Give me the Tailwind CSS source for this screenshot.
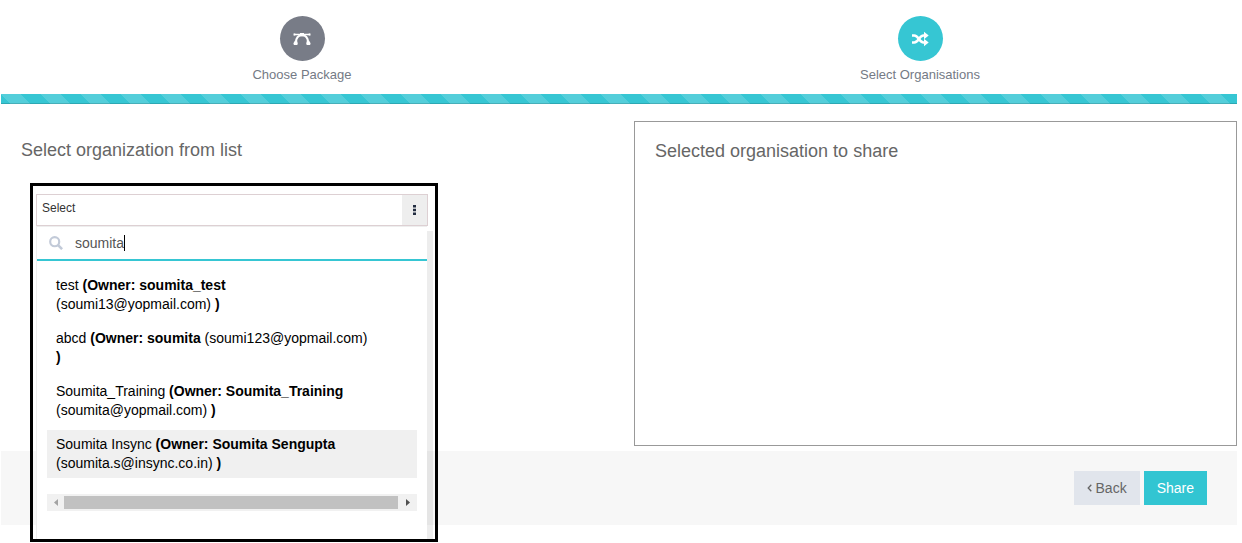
<!DOCTYPE html>
<html lang="en">
<head>
<meta charset="utf-8">
<meta name="viewport" content="width=device-width, initial-scale=1">
<title>Share package</title>
<script src="https://cdn.jsdelivr.net/npm/@tailwindcss/browser@4"></script>
</head>
<body class="min-h-screen bg-white pl-px pr-[5px] font-['Liberation_Sans',Arial,sans-serif] text-sm text-[#666666]">
<header>
  <ol class="grid grid-cols-2 pt-4 text-[13px] leading-5 text-[#747a85]">
    <li class="flex flex-col items-center gap-1 pr-4">
      <span class="flex size-[45px] items-center justify-center rounded-full bg-[#787c87]">
        <svg class="h-[14px] w-[18px]" viewBox="0 0 18 14" fill="none" stroke="#fff" aria-hidden="true">
          <path d="M1 2.500h16" stroke-width="1.500"/>
          <path d="M3 10C3.200 6 5 3.400 9 3 13 3.400 14.800 6 15 10" stroke-width="2"/>
          <path d="M7 1h4v3.200H7zM.5 1.600h1.800v1.900H.5zM15.700 1.600h1.800v1.900h-1.800zM2 8.400h1.900l.9 2.800-.5 1.900H.9l-.5-1.900zM14.100 8.400H16l1.600 2.800-.5 1.900h-3.400l-.5-1.900z" fill="#fff" stroke="none"/>
        </svg>
      </span>
      <span>Choose Package</span>
    </li>
    <li class="flex flex-col items-center gap-1 pr-4">
      <span class="flex size-[45px] items-center justify-center rounded-full bg-[#36c6d3]">
        <svg class="h-4 w-[18px]" viewBox="0 0 18 16" fill="none" stroke="#fff" stroke-width="2.500" aria-hidden="true">
          <path d="M1 4.500h2.200C7.800 4.500 8 11.500 12.500 11.500H14M1 11.500h2.200C7.800 11.500 8 4.500 12.500 4.500H14"/>
          <path d="M13 .8l4.700 3.700L13 8.200zM13 7.800l4.700 3.700-4.700 3.700z" fill="#fff" stroke="none"/>
        </svg>
      </span>
      <span>Select Organisations</span>
    </li>
  </ol>
  <div role="progressbar" aria-label="Step 2 of 2" class="mt-[9px] h-[10px] bg-[#36c6d3] bg-[linear-gradient(45deg,rgba(255,255,255,.15)_25%,transparent_25%,transparent_50%,rgba(255,255,255,.15)_50%,rgba(255,255,255,.15)_75%,transparent_75%,transparent)] bg-[length:40px_40px] shadow-[inset_0_-1px_0_rgba(0,0,0,0.15)]"></div>
</header>

<main class="grid grid-cols-2 pt-[17px]">
  <section class="relative pl-5 pt-[18px]">
    <h2 class="text-lg leading-[22px]">Select organization from list</h2>

    <div class="absolute left-[29px] top-[62px] w-[408px] border-[3px] border-black pl-[3px] pt-2">
      <button type="button" aria-expanded="true" class="flex h-8 w-[392px] justify-between border border-[#ddd0d3] bg-white text-left text-xs text-[#333]">
        <span class="pl-[5px] pt-[5px]">Select</span>
        <span class="flex w-[25px] items-center justify-center self-stretch bg-[#eeeeee]">
          <svg class="h-[10px] w-[3px]" viewBox="0 0 3 10" fill="#222c40" aria-hidden="true"><path d="M0 0h3v2.500H0zM0 3.700h3v2.500H0zM0 7.500h3V10H0z"/></svg>
        </span>
      </button>
      <div class="flex">
        <div class="w-[391px] shrink-0 border-l border-[#eeeeee] bg-white">
          <label class="flex h-[35px] items-center gap-3 border-b-2 border-t border-b-[#36c6d3] border-t-[#eeeeee] pl-3">
            <svg class="size-[14px] shrink-0" viewBox="0 0 13 13" fill="none" stroke="#c2cad8" stroke-width="2" aria-hidden="true"><circle cx="5.300" cy="5.300" r="4.200"/><path d="M8.400 8.400l3.800 3.800" stroke-width="2.400"/></svg>
            <span class="relative flex w-full items-center">
              <input type="text" aria-label="Search organization" value="soumita" class="w-full bg-transparent text-sm text-[#555] outline-none">
              <span class="absolute left-[49px] h-4 w-px bg-black"></span>
            </span>
          </label>
          <ul role="listbox" class="flex flex-col gap-[5px] px-[10px] pt-[10px] leading-[19px] text-black">
            <li role="option" class="px-[9px] py-[5px]">test <b>(Owner: soumita_test</b><br>(soumi13@yopmail.com) <b>)</b></li>
            <li role="option" class="px-[9px] py-[5px]">abcd <b>(Owner: soumita</b> (soumi123@yopmail.com)<br><b>)</b></li>
            <li role="option" class="px-[9px] py-[5px]">Soumita_Training <b>(Owner: Soumita_Training</b><br>(soumita@yopmail.com) <b>)</b></li>
            <li role="option" aria-selected="true" class="bg-[#f0f0f0] px-[9px] py-[5px]">Soumita Insync <b>(Owner: Soumita Sengupta</b><br>(soumita.s@insync.co.in) <b>)</b></li>
          </ul>
          <div class="px-[10px] pb-7 pt-4">
            <div class="flex h-[17px] items-center bg-[#f1f1f1]">
              <span class="flex w-[17px] justify-center"><svg class="h-[7px] w-1" viewBox="0 0 4 7" fill="#a3a3a3" aria-hidden="true"><path d="M4 0v7L0 3.500z"/></svg></span>
              <span class="h-[13px] flex-1 bg-[#c1c1c1]"></span>
              <span class="flex w-[19px] justify-center"><svg class="h-[7px] w-1" viewBox="0 0 4 7" fill="#505050" aria-hidden="true"><path d="M0 0v7l4-3.500z"/></svg></span>
            </div>
          </div>
        </div>
        <span class="mt-[5px] w-[6px] bg-black/7"></span>
      </div>
    </div>
  </section>

  <section class="ml-[15px] min-h-[325px] border border-[#999999] px-5 pt-[18px]">
    <h2 class="text-lg leading-[22px]">Selected organisation to share</h2>
  </section>
</main>

<footer class="mt-[5px] flex justify-end gap-1 bg-[#f7f7f7] py-5 pr-[30px]">
  <button type="button" class="flex h-[34px] items-center gap-1 bg-[#e1e5ec] px-[13px] text-sm text-[#666]">
    <svg class="h-2 w-[5px]" viewBox="0 0 5 8" fill="none" stroke="#666" stroke-width="1.300" aria-hidden="true"><path d="M4.300.7L1.200 4l3.100 3.300"/></svg>Back
  </button>
  <button type="button" class="h-[34px] bg-[#32c5d2] px-[13px] text-sm text-white">Share</button>
</footer>
</body>
</html>
